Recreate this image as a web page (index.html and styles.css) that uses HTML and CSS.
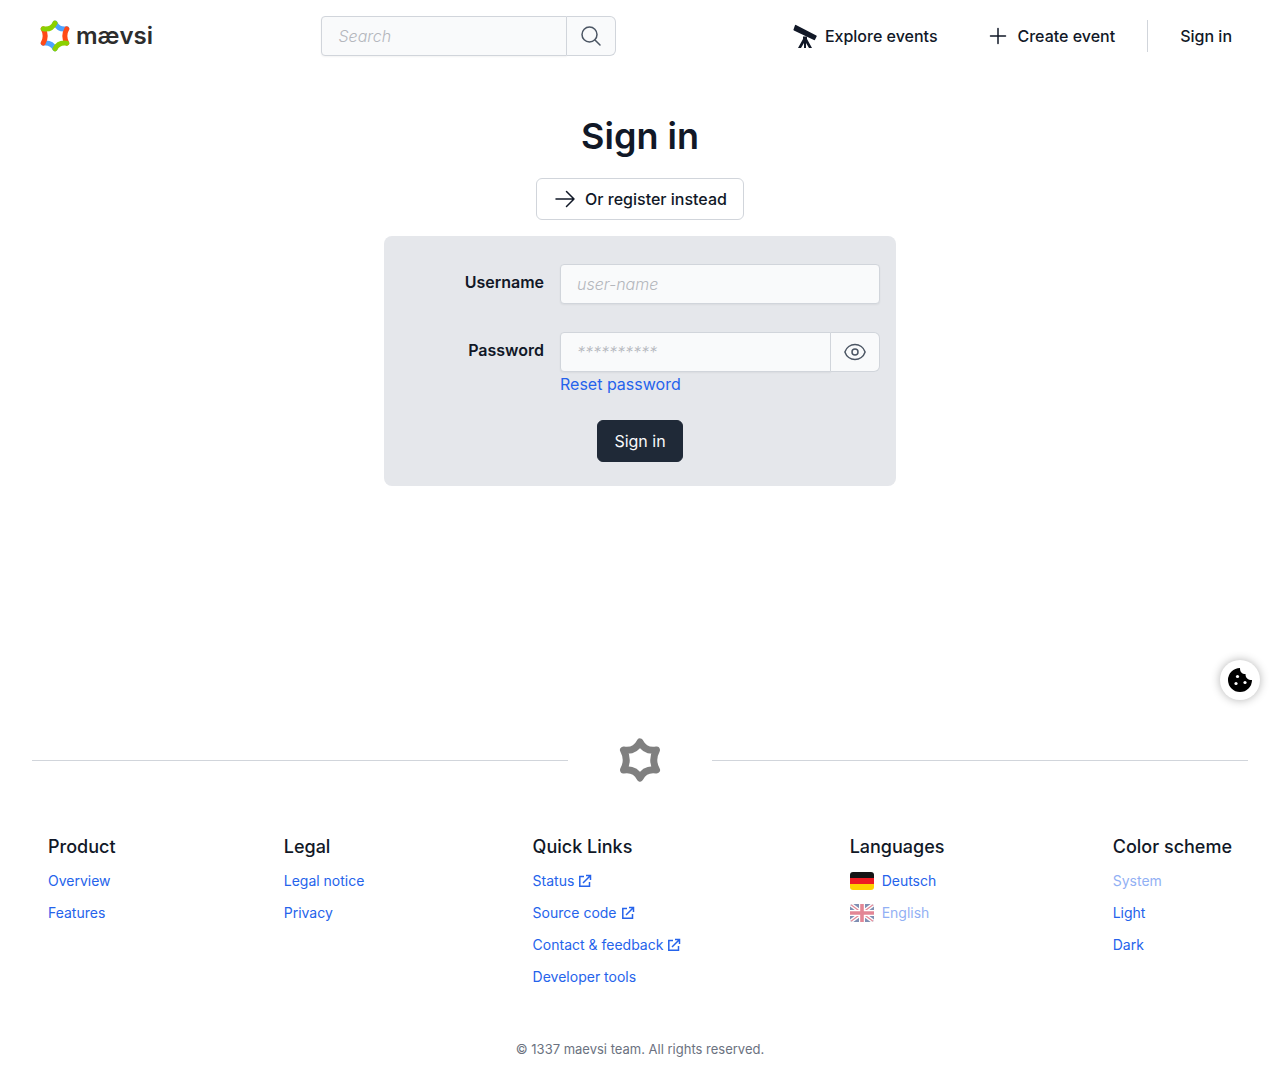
FILE: index.html
```html
<!DOCTYPE html>
<html lang="en">
<head>
<meta charset="utf-8">
<meta name="viewport" content="width=device-width, initial-scale=1">
<title>Sign in · maevsi</title>
<link rel="stylesheet" href="styles.css">
</head>
<body>
<header class="header">
  <a class="logo" href="#" aria-label="mævsi home">
    <svg class="logo-mark" viewBox="0 0 42 44" fill="none" stroke-width="7" stroke-linecap="round" aria-hidden="true">
      <path stroke="#4da3ff" d="M21 4Q26 14 37.500 12M4.500 32Q16 30 21 40"/>
      <path stroke="#ff4a17" d="M4.500 12Q10 22 4.500 32M37.500 12Q32 22 37.500 32"/>
      <path stroke="#8bd100" d="M4.500 12Q16 14 21 4M21 40Q26 30 37.500 32"/>
    </svg>
    <span class="logo-text">mævsi</span>
  </a>
  <form class="search field-group" role="search">
    <input class="input" type="search" placeholder="Search" aria-label="Search">
    <button class="input-button" type="button" aria-label="Search">
      <svg class="icon" viewBox="0 0 24 24" fill="none" stroke="currentColor" stroke-width="1.5" stroke-linecap="round"><circle cx="10.500" cy="10.500" r="7.500"/><path d="m16 16 5 5"/></svg>
    </button>
  </form>
  <nav class="nav" aria-label="Main">
    <a class="nav-link" href="#">
      <svg class="icon" viewBox="0 0 24 24" fill="currentColor" aria-hidden="true"><path d="M3 1 23.300 11.500a.8.800 0 0 1 .3 1.100l-1.600 3.200a.8.800 0 0 1-1.100.3L.9 6.500a.8.800 0 0 1-.4-1.100l1.400-4a.8.800 0 0 1 1.100-.4z"/><path d="M10 12.500h4V15l5 9h-3l-3-5v5h-2v-5l-3 5H5l5-9z"/></svg>
      Explore events</a>
    <a class="nav-link" href="#">
      <svg class="icon" viewBox="0 0 24 24" fill="none" stroke="currentColor" stroke-width="1.500" stroke-linecap="round" aria-hidden="true"><path d="M12 4.500v15M4.500 12h15"/></svg>
      Create event</a>
    <a class="nav-link nav-signin" href="#">Sign in</a>
  </nav>
</header>

<main class="main">
  <h1 class="title">Sign in</h1>
  <button class="button button-outline" type="button">
    <svg class="icon" viewBox="0 0 24 24" fill="none" stroke="currentColor" stroke-width="1.500" stroke-linecap="round" stroke-linejoin="round" aria-hidden="true"><path d="M13.500 4.500 21 12l-7.500 7.500M21 12H3"/></svg>
    Or register instead
  </button>
  <form class="card">
    <div class="form-row">
      <label class="label" for="username">Username</label>
      <div class="field-group"><input class="input" id="username" type="text" placeholder="user-name"></div>
    </div>
    <div class="form-row">
      <label class="label" for="password">Password</label>
      <div>
        <div class="field-group">
          <input class="input" id="password" type="password" placeholder="**********">
          <button class="input-button" type="button" aria-label="Show password">
            <svg class="icon" viewBox="0 0 24 24" fill="none" stroke="currentColor" stroke-width="1.500" aria-hidden="true"><path d="M2 12.300a1 1 0 0 1 0-.6C3.400 7.500 7.400 4.500 12 4.500s8.600 3 10 7.200a1 1 0 0 1 0 .6c-1.400 4.200-5.400 7.200-10 7.200S3.400 16.500 2 12.300z"/><circle cx="12" cy="12" r="3"/></svg>
          </button>
        </div>
        <a class="link" href="#">Reset password</a>
      </div>
    </div>
    <button class="button button-primary" type="button">Sign in</button>
  </form>
</main>

<footer class="footer">
  <div class="divider">
    <svg class="divider-mark" viewBox="0 0 42 44" fill="none" stroke="#808080" stroke-width="7" stroke-linejoin="round" aria-hidden="true"><path d="M21 4Q26 14 37.500 12Q32 22 37.500 32Q26 30 21 40Q16 30 4.500 32Q10 22 4.500 12Q16 14 21 4z"/></svg>
  </div>
  <div class="columns">
    <section><h2 class="column-title">Product</h2>
      <ul class="list"><li><a class="link" href="#">Overview</a></li><li><a class="link" href="#">Features</a></li></ul></section>
    <section><h2 class="column-title">Legal</h2>
      <ul class="list"><li><a class="link" href="#">Legal notice</a></li><li><a class="link" href="#">Privacy</a></li></ul></section>
    <section><h2 class="column-title">Quick Links</h2>
      <ul class="list">
        <li><a class="link external" href="#">Status <svg class="icon-small" viewBox="0 0 14 14" fill="none" stroke="currentColor" stroke-width="1.500" aria-hidden="true"><path d="M6 2.500H1.800v9.700h9.700V8M5 9l7-7M8 1.500h4.500V6"/></svg></a></li>
        <li><a class="link external" href="#">Source code <svg class="icon-small" viewBox="0 0 14 14" fill="none" stroke="currentColor" stroke-width="1.500" aria-hidden="true"><path d="M6 2.500H1.800v9.700h9.700V8M5 9l7-7M8 1.500h4.500V6"/></svg></a></li>
        <li><a class="link external" href="#">Contact &amp; feedback <svg class="icon-small" viewBox="0 0 14 14" fill="none" stroke="currentColor" stroke-width="1.500" aria-hidden="true"><path d="M6 2.500H1.800v9.700h9.700V8M5 9l7-7M8 1.500h4.500V6"/></svg></a></li>
        <li><a class="link" href="#">Developer tools</a></li>
      </ul></section>
    <section><h2 class="column-title">Languages</h2>
      <ul class="list">
        <li><a class="link language" href="#"><svg class="flag" viewBox="0 0 24 18" aria-hidden="true"><path fill="#141414" d="M0 0h24v6H0z"/><path fill="#ed1c24" d="M0 6h24v6H0z"/><path fill="#ffd100" d="M0 12h24v6H0z"/></svg>Deutsch</a></li>
        <li><a class="link language inactive" href="#"><svg class="flag" viewBox="0 0 24 18" aria-hidden="true"><path fill="#012169" d="M0 0h24v18H0z"/><path stroke="#fff" stroke-width="4" d="m0 0 24 18M24 0 0 18"/><path stroke="#c8102e" stroke-width="1.200" d="m0 0 24 18M24 0 0 18"/><path stroke="#fff" stroke-width="6" d="M12 0v18M0 9h24"/><path stroke="#c8102e" stroke-width="3.600" d="M12 0v18M0 9h24"/></svg>English</a></li>
      </ul></section>
    <section><h2 class="column-title">Color scheme</h2>
      <ul class="list"><li><a class="link inactive" href="#">System</a></li><li><a class="link" href="#">Light</a></li><li><a class="link" href="#">Dark</a></li></ul></section>
  </div>
  <p class="copyright">© 1337 maevsi team. All rights reserved.</p>
</footer>

<button class="cookie" type="button" aria-label="Cookie settings">
  <svg class="icon" viewBox="0 0 24 24" aria-hidden="true"><path d="M12 0c0 4 2 6 5.500 6 0 4 2.500 6 6.500 6A12 12 0 1 1 12 0z"/><g fill="#fff"><circle cx="9.500" cy="8.500" r="1.600"/><circle cx="8" cy="15.500" r="1.600"/><circle cx="17" cy="14.500" r="1.600"/></g></svg>
</button>
</body>
</html>
```
FILE: styles.css
```css
* { box-sizing: border-box; }
body {
  margin: 0;
  min-height: 100vh;
  display: flex;
  flex-direction: column;
  font: 16px/24px Inter, "Open Sans", sans-serif;
  color: #111827;
  background: #fff;
}
h1, h2, p, ul { margin: 0; padding: 0; }
ul { list-style: none; }
a { color: inherit; text-decoration: none; }
button, input { font: inherit; color: inherit; }
button { cursor: pointer; }
.icon { width: 24px; height: 24px; flex: none; display: block; }

.header {
  display: flex;
  align-items: center;
  justify-content: space-between;
  gap: 16px;
  padding: 16px 32px;
}
.logo { display: flex; align-items: center; gap: 6px; padding: 0 8px; }
.logo-mark { width: 30px; height: 32px; }
.logo-text { font-size: 24px; line-height: 32px; font-weight: 600; color: #2d2d2d; }
.search { width: 295px; }
.nav { display: flex; align-items: center; font-weight: 500; }
.nav-link { display: flex; align-items: center; gap: 8px; padding: 4px 32px 4px 16px; }
.nav-signin { border-left: 1px solid #d1d5db; padding: 4px 16px 4px 32px; }

.field-group { display: flex; height: 40px; }
.input {
  flex: 1;
  min-width: 0;
  padding: 0 16px;
  border: 1px solid #d1d5db;
  border-radius: 4px;
  background: #f9fafb;
  box-shadow: 0 1px 2px #0000000d;
}
.input::placeholder { color: #b4b7bd; font-style: italic; font-weight: 300; opacity: 1; }
.input:not(:last-child) { border-radius: 4px 0 0 4px; }
.input-button {
  width: 49px;
  padding: 0 12px;
  border: 1px solid #d1d5db;
  border-left: 0;
  border-radius: 0 6px 6px 0;
  background: #f9fafb;
  color: #4b5563;
}

.main {
  flex: 1;
  display: flex;
  flex-direction: column;
  align-items: center;
  gap: 16px;
  padding: 38px 16px;
}
.title { font-size: 36px; line-height: 52px; font-weight: 600; }
.button {
  display: flex;
  align-items: center;
  gap: 8px;
  height: 42px;
  padding: 0 16px;
  border: 1px solid #d1d5db;
  border-radius: 6px;
  font-weight: 500;
}
.button-outline { background: #fff; }
.button-primary { align-self: center; border-color: #1f2937; background: #1f2937; color: #f9fafb; font-weight: 400; }
.card {
  display: flex;
  flex-direction: column;
  width: 100%;
  max-width: 512px;
  padding: 28px 16px 24px;
  border-radius: 8px;
  background: #e5e7eb;
}
.form-row {
  display: grid;
  grid-template-columns: minmax(0, 144fr) minmax(0, 320fr);
  gap: 16px;
  margin-bottom: 28px;
}
.form-row + .form-row { margin-bottom: 24px; }
.label { padding-top: 6px; text-align: right; font-weight: 600; }
.form-row .link { display: block; }
.link { color: #2563eb; }

.footer { padding: 0 32px 17px; }
.divider { display: flex; align-items: center; justify-content: center; gap: 51px; }
.divider::before, .divider::after { content: ""; flex: 1; height: 1px; background: #d1d5db; }
.divider-mark { width: 42px; height: 44px; }
.columns {
  display: flex;
  flex-wrap: wrap;
  justify-content: space-between;
  gap: 24px;
  padding: 51px 16px 46px;
}
.column-title { margin-bottom: 4px; font-size: 18px; line-height: 28px; font-weight: 500; }
.list { font-size: 14px; line-height: 32px; }
.list .link { display: flex; align-items: center; width: max-content; }
.list .external { gap: 4px; }
.list .language { gap: 8px; }
.icon-small { width: 14px; height: 14px; }
.flag { width: 24px; height: 18px; border-radius: 3px; }
.inactive { opacity: 0.5; }
.copyright { text-align: center; font-size: 13px; line-height: 20px; color: #6b7280; }

.cookie {
  position: fixed;
  right: 20px;
  bottom: 376px;
  width: 40px;
  height: 40px;
  padding: 8px;
  border: 0;
  border-radius: 50%;
  background: #fff;
  box-shadow: 0 0 10px #0000004d;
}
```
